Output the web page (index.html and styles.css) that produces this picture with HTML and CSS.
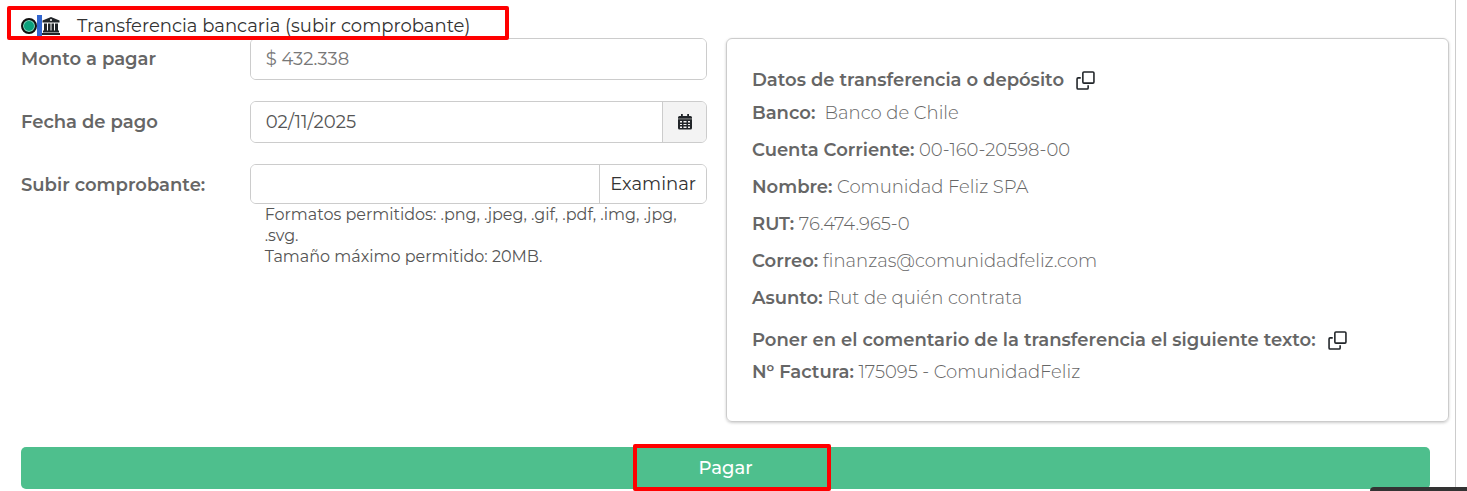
FILE: index.html
```html
<!DOCTYPE html>
<html lang="es">
<head>
    <meta charset="UTF-8">
    <meta name="viewport" content="width=device-width, initial-scale=1.0">
    <title>Pago</title>
    <link rel="stylesheet" href="styles.css">
</head>
<body>
<form class="panel">
    <div class="method">
        <input class="method-radio" type="radio" id="transfer" name="method" checked>
        <label class="method-label" for="transfer">
            <span class="method-cursor"></span>
            <svg class="icon-bank" viewBox="0 0 18 18" aria-hidden="true">
                <path d="M9 0 17.500 3.500V5.500H.5V3.500zM2 6.500H5V14H2zM6 6.500H8.500V14H6zM9.500 6.500H12V14H9.500zM13 6.500H16V14H13zM1 13.500H17V15.500H1zM0 16H18V18H0z"/>
                <circle cx="9" cy="3" r="1" fill="#fff"/>
            </svg>
            <span class="method-text">Transferencia bancaria (subir comprobante)</span>
        </label>
        <div class="mark mark-method"></div>
    </div>

    <div class="columns">
        <div class="fields">
            <label class="field-label" for="amount">Monto a pagar</label>
            <div class="group">
                <input class="input muted" type="text" id="amount" value="$ 432.338" readonly>
            </div>

            <label class="field-label" for="date">Fecha de pago</label>
            <div class="group">
                <input class="input" type="text" id="date" value="02/11/2025">
                <button class="addon" type="button" aria-label="Calendario">
                    <svg class="icon-calendar" viewBox="0 0 14 16" aria-hidden="true">
                        <path fill="#212529" fill-rule="evenodd" d="M3 0H4.800V2H9.200V0H11V2H12.500Q14 2 14 3.500V14Q14 15.500 12.500 15.500H1.500Q0 15.500 0 14V3.500Q0 2 1.500 2H3zM2 7V8.500H4V7zM5.500 7V8.500H8.500V7zM10 7V8.500H12V7zM2 10V11H4V10zM5.500 10V11H8.500V10zM10 10V11H12V10zM2 12.500V14H4V12.500zM5.500 12.500V14H8.500V12.500zM10 12.500V14H12V12.500z"/>
                        <path fill="#777" d="M0 4.300H14V5.500H0z"/>
                    </svg>
                </button>
            </div>

            <label class="field-label" for="receipt">Subir comprobante:</label>
            <div>
                <div class="group group-file">
                    <input class="input" type="text" id="receipt" readonly>
                    <button class="browse" type="button">Examinar</button>
                </div>
                <p class="help">Formatos permitidos: .png, .jpeg, .gif, .pdf, .img, .jpg, .svg.<br>Tamaño máximo permitido: 20MB.</p>
            </div>
        </div>

        <div class="card">
            <div class="card-title">
                <strong>Datos de transferencia o depósito</strong>
                <button class="copy" type="button" aria-label="Copiar datos">
                    <svg class="icon-copy" viewBox="0 0 18 18" aria-hidden="true">
                        <rect x="6.500" y="1" width="10.500" height="10.500" rx="1"/>
                        <path d="M4.500 6.500H2Q1 6.500 1 7.500V16Q1 17 2 17H10.500Q11.500 17 11.500 16V13.500"/>
                    </svg>
                </button>
            </div>
            <div class="rows">
                <p><strong>Banco:</strong>&nbsp; Banco de Chile</p>
                <p><strong>Cuenta Corriente:</strong> 00-160-20598-00</p>
                <p><strong>Nombre:</strong> Comunidad Feliz SPA</p>
                <p><strong>RUT:</strong> 76.474.965-0</p>
                <p><strong>Correo:</strong> finanzas@comunidadfeliz.com</p>
                <p><strong>Asunto:</strong> Rut de quién contrata</p>
            </div>
            <div class="card-title">
                <strong>Poner en el comentario de la transferencia el siguiente texto:</strong>
                <button class="copy" type="button" aria-label="Copiar texto">
                    <svg class="icon-copy" viewBox="0 0 18 18" aria-hidden="true">
                        <rect x="6.500" y="1" width="10.500" height="10.500" rx="1"/>
                        <path d="M4.500 6.500H2Q1 6.500 1 7.500V16Q1 17 2 17H10.500Q11.500 17 11.500 16V13.500"/>
                    </svg>
                </button>
            </div>
            <div class="rows">
                <p><strong>Nº Factura:</strong> 175095 - ComunidadFeliz</p>
            </div>
        </div>
    </div>

    <div class="actions">
        <button class="pay" type="button">Pagar</button>
        <div class="mark mark-pay"></div>
    </div>
</form>
<div class="chat-tab"></div>
</body>
</html>
```
FILE: styles.css
```css
* {
    box-sizing: border-box;
}

body {
    margin: 0;
    background: #fff;
    color: #666;
    font-family: Montserrat, Inter, "Open Sans", sans-serif;
    font-size: 18px;
    line-height: 27px;
}

p {
    margin: 0;
}

strong {
    font-weight: 600;
}

input,
button {
    margin: 0;
    font: inherit;
}

button {
    cursor: pointer;
}

.panel {
    margin-right: 11px;
    padding: 0 6px 2px 21px;
    border-right: 1px solid #ccc;
}

/* payment method */
.method {
    position: relative;
    display: flex;
    align-items: center;
    height: 38px;
    padding-top: 14px;
    color: #333;
}

.method-radio {
    appearance: none;
    width: 16px;
    height: 16px;
    border: 2px solid #111;
    border-radius: 50%;
    background: #0aa17c;
    box-shadow: inset 0 0 0 1px #8fd3c0;
}

.method-label {
    display: flex;
    align-items: center;
}

.method-cursor {
    width: 5px;
    height: 23px;
    background: #3367d1;
}

.icon-bank {
    width: 18px;
    height: 18px;
    margin-right: 17px;
    fill: #212529;
}

.mark {
    position: absolute;
    border: 4px solid #f00;
    border-radius: 2px;
    pointer-events: none;
}

.mark-method {
    top: 6px;
    left: -14px;
    width: 502px;
    height: 34px;
}

.mark-pay {
    top: -3px;
    left: 50%;
    width: 198px;
    height: 47px;
    margin-left: -93px;
}

/* form and bank details */
.columns {
    display: grid;
    grid-template-columns: 686fr 723fr;
    gap: 19px;
}

.fields {
    display: grid;
    grid-template-columns: 1fr 2fr;
    align-content: start;
    row-gap: 21px;
}

.field-label {
    padding-top: 8px;
    font-weight: 600;
}

.group {
    display: flex;
    height: 42px;
    border: 1px solid #ccc;
    border-radius: 6px;
    overflow: hidden;
}

.group-file {
    height: 40px;
}

.input {
    flex: 1;
    min-width: 0;
    padding: 0 15px;
    border: 0;
    outline: 0;
    background: #fff;
    color: #555;
}

.muted {
    color: #777;
}

.addon,
.browse {
    display: flex;
    align-items: center;
    justify-content: center;
    padding: 0 10px;
    border: 0;
    border-left: 1px solid #ccc;
    background: #fff;
    color: #333;
}

.addon {
    width: 44px;
    background: #f3f3f3;
}

.icon-calendar {
    width: 14px;
    height: 16px;
}

.help {
    padding: 0 15px;
    color: #555;
    font-size: 16px;
    line-height: 21px;
}

.card {
    padding: 25px 25px 35px;
    border: 1px solid #ccc;
    border-radius: 6px;
    box-shadow: 0 1px 3px rgba(0, 0, 0, 0.2);
}

.card-title {
    display: flex;
    align-items: center;
    gap: 12px;
    height: 32px;
    margin-bottom: 4px;
}

.copy {
    display: flex;
    padding: 0;
    border: 0;
    background: none;
}

.icon-copy {
    width: 19px;
    height: 19px;
    fill: none;
    stroke: #212529;
    stroke-width: 1.5;
}

.rows {
    display: grid;
    gap: 10px;
    font-weight: 300;
}

.rows + .card-title {
    margin-top: 12px;
    margin-bottom: 3px;
}

.actions {
    position: relative;
    margin: 25px 19px 0 0;
}

.pay {
    display: block;
    width: 100%;
    height: 42px;
    border: 0;
    border-radius: 5px;
    background: #4ebf8d;
    color: #fff;
    font-weight: 500;
}

.chat-tab {
    position: fixed;
    right: 0;
    bottom: 0;
    width: 97px;
    height: 4px;
    border-top-left-radius: 4px;
    background: #333;
}
```
